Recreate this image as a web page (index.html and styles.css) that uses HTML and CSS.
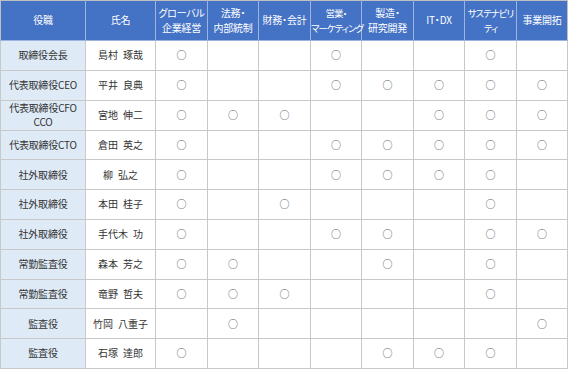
FILE: index.html
```html
<!DOCTYPE html>
<html lang="ja">
<head>
<meta charset="utf-8">
<link rel="stylesheet" href="styles.css">
</head>
<body>
<table class="skills">
<colgroup>
<col class="c-role"><col class="c-name">
<col class="c-a"><col class="c-b"><col class="c-a"><col class="c-b"><col class="c-a"><col class="c-b"><col class="c-a"><col class="c-b">
</colgroup>
<thead>
<tr>
<th>役職</th><th>氏名</th><th>グローバル<br>企業経営</th><th>法務・<br>内部統制</th><th>財務・会計</th><th class="tight">営業・<br>マーケティング</th><th>製造・<br>研究開発</th><th>IT・DX</th><th class="tight">サステナビリ<br>ティ</th><th>事業開拓</th>
</tr>
</thead>
<tbody>
<tr><td class="role">取締役会長</td><td class="name">島村&ensp;琢哉</td><td>○</td><td></td><td></td><td>○</td><td></td><td></td><td>○</td><td></td></tr>
<tr><td class="role">代表取締役CEO</td><td class="name">平井&ensp;良典</td><td>○</td><td></td><td></td><td>○</td><td>○</td><td>○</td><td>○</td><td>○</td></tr>
<tr><td class="role">代表取締役CFO<br>CCO</td><td class="name">宮地&ensp;伸二</td><td>○</td><td>○</td><td>○</td><td></td><td></td><td>○</td><td>○</td><td>○</td></tr>
<tr><td class="role">代表取締役CTO</td><td class="name">倉田&ensp;英之</td><td>○</td><td></td><td></td><td>○</td><td>○</td><td>○</td><td>○</td><td>○</td></tr>
<tr><td class="role">社外取締役</td><td class="name">柳&ensp;弘之</td><td>○</td><td></td><td></td><td>○</td><td>○</td><td>○</td><td>○</td><td></td></tr>
<tr><td class="role">社外取締役</td><td class="name">本田&ensp;桂子</td><td>○</td><td></td><td>○</td><td></td><td></td><td></td><td>○</td><td></td></tr>
<tr><td class="role">社外取締役</td><td class="name">手代木&ensp;功</td><td>○</td><td></td><td></td><td>○</td><td>○</td><td></td><td>○</td><td>○</td></tr>
<tr><td class="role">常勤監査役</td><td class="name">森本&ensp;芳之</td><td>○</td><td>○</td><td></td><td></td><td>○</td><td></td><td>○</td><td></td></tr>
<tr><td class="role">常勤監査役</td><td class="name">竜野&ensp;哲夫</td><td>○</td><td>○</td><td>○</td><td></td><td></td><td></td><td>○</td><td></td></tr>
<tr><td class="role">監査役</td><td class="name">竹岡&ensp;八重子</td><td></td><td>○</td><td></td><td></td><td></td><td></td><td></td><td>○</td></tr>
<tr><td class="role">監査役</td><td class="name">石塚&ensp;達郎</td><td>○</td><td></td><td></td><td></td><td>○</td><td>○</td><td>○</td><td></td></tr>
</tbody>
</table>
</body>
</html>
```

FILE: styles.css
```css
html, body {
  margin: 0;
  padding: 0;
  background: #ffffff;
}
.skills {
  border-collapse: collapse;
  table-layout: fixed;
  width: 568px;
  font-family: "Noto Sans CJK JP", "Noto Sans", sans-serif;
  font-feature-settings: "palt";
  font-size: 10px;
  color: #333333;
}
.c-role { width: 85px; }
.c-name { width: 70px; }
.c-a { width: 52px; }
.c-b { width: 51px; }
.skills th {
  background: #4472c4;
  color: #ffffff;
  font-weight: normal;
  height: 39px;
  padding: 0;
  line-height: 14.5px;
  text-align: center;
  vertical-align: middle;
  white-space: nowrap;
  border: 1px solid #9cb4de;
  border-top-color: #c0c0c0;
  letter-spacing: -0.2px;
}
.skills th.tight {
  font-size: 9.5px;
  letter-spacing: -1px;
}
.skills th:first-child { border-left-color: #c0c0c0; }
.skills th:last-child { border-right-color: #c0c0c0; }
.skills td {
  height: 28.8px;
  padding: 0;
  text-align: center;
  vertical-align: middle;
  border: 1px solid #c8c8c8;
  line-height: 14.5px;
  color: #555555;
  white-space: nowrap;
}
.skills td.role {
  background: #deeaf6;
  color: #333333;
  letter-spacing: -0.2px;
}
.skills td.name { color: #333333; }
```
